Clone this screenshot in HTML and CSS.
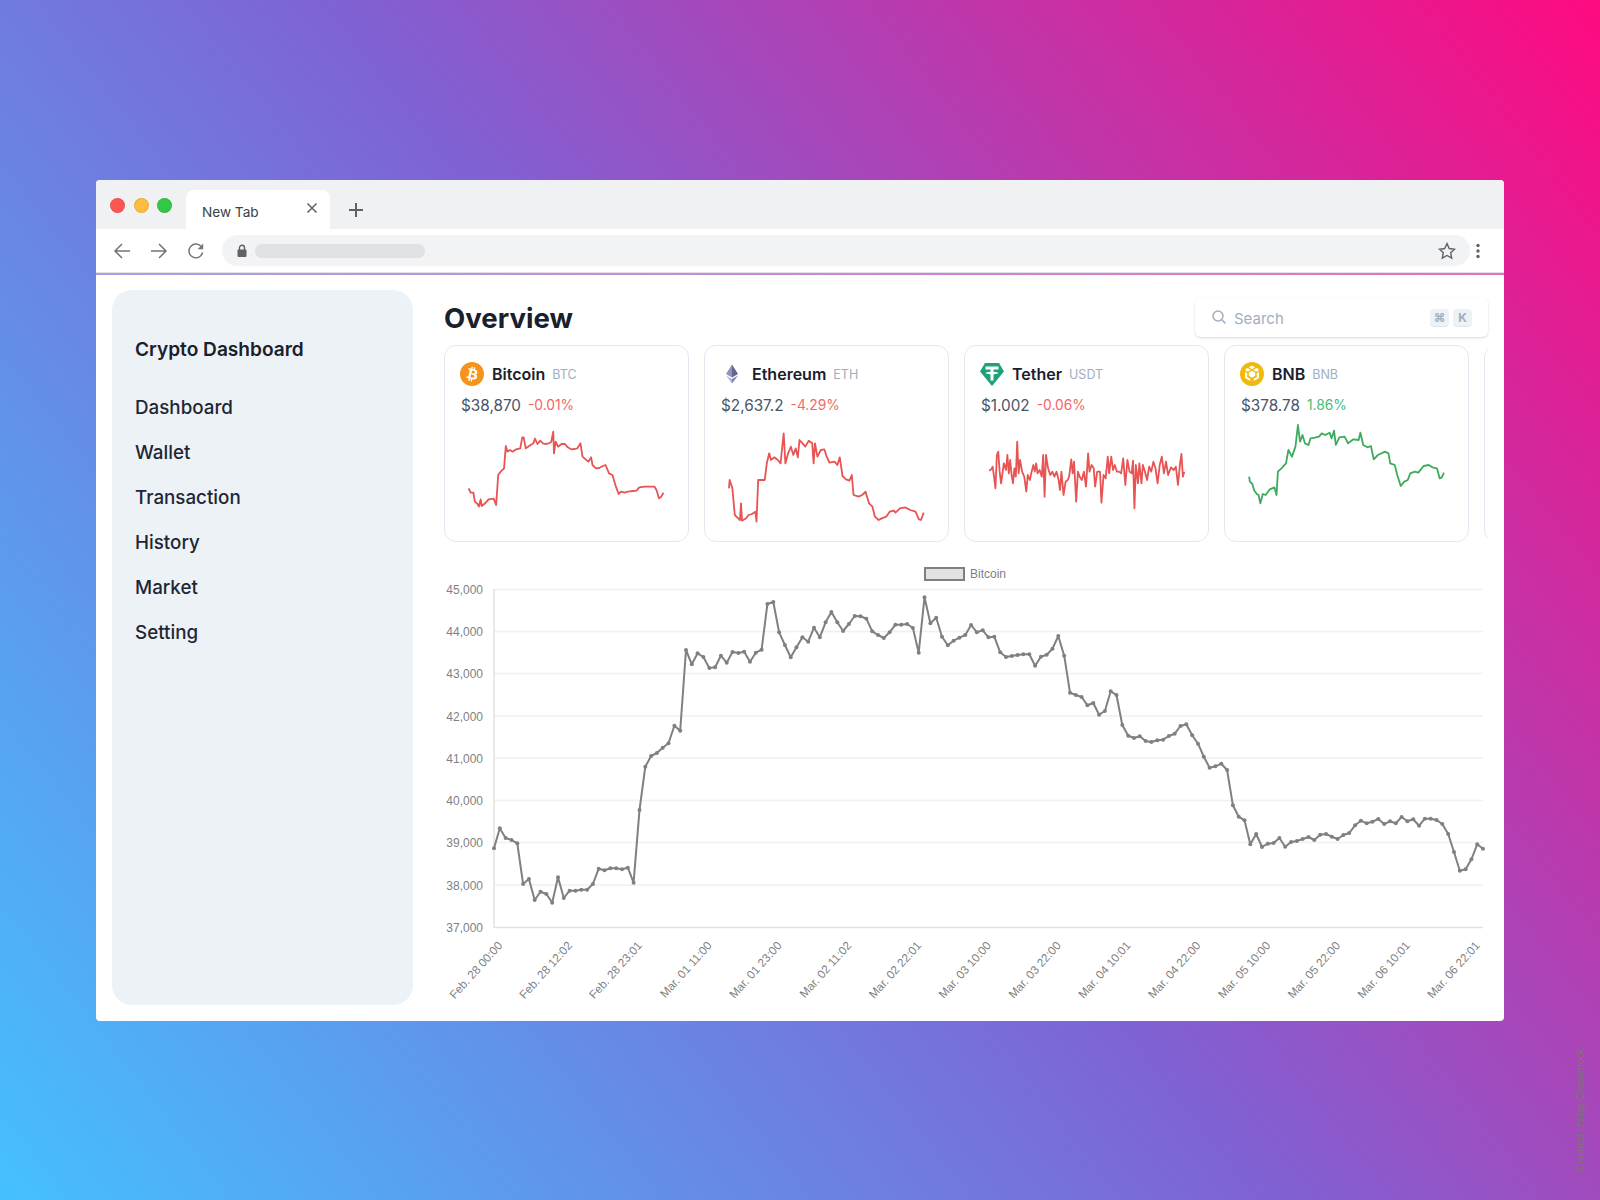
FILE: index.html
```html
<!DOCTYPE html>
<html lang="en">
<head>
    <meta charset="UTF-8">
    <title>Crypto Dashboard</title>
    <link rel="stylesheet" href="styles.css">
</head>
<body>
    <svg class="defs" width="0" height="0">
        <defs>
            <marker id="dot" markerUnits="userSpaceOnUse" markerWidth="6" markerHeight="6" refX="3" refY="3">
                <circle cx="3" cy="3" r="2" fill="#808080"/>
            </marker>
        </defs>
    </svg>

    <div class="window">
        <!-- Browser chrome -->
        <div class="tabbar">
            <div class="lights">
                <span class="light red"></span>
                <span class="light yellow"></span>
                <span class="light green"></span>
            </div>
            <div class="tab">
                <span class="tab-title">New Tab</span>
                <svg class="tab-close" width="12" height="12" viewBox="0 0 12 12"><path d="M1.5 1.5l9 9M10.5 1.5l-9 9"/></svg>
            </div>
            <svg class="tab-new" width="18" height="18" viewBox="0 0 18 18"><path d="M9 2v14M2 9h14"/></svg>
        </div>
        <div class="toolbar">
            <svg class="nav-btn" width="18" height="18" viewBox="0 0 18 18"><path d="M17 9H2M9 2L2 9l7 7"/></svg>
            <svg class="nav-btn" width="18" height="18" viewBox="0 0 18 18"><path d="M1 9h15M9 2l7 7-7 7"/></svg>
            <svg class="nav-btn" width="18" height="18" viewBox="0 0 18 18"><path d="M15.6 10.5A6.9 6.9 0 1 1 14 4.3"/><path class="solid" d="M16.2 1.6v5.6h-5.6z"/></svg>
            <div class="urlbar">
                <svg class="lock" width="10" height="13" viewBox="0 0 10 13"><path d="M2.5 6V3.8a2.5 2.5 0 0 1 5 0V6" class="shackle"/><rect x="0.5" y="5.5" width="9" height="7.5" rx="1"/></svg>
                <span class="url-pill"></span>
                <svg class="star" width="18" height="18" viewBox="0 0 18 18"><path d="M9 1.6l2.3 4.9 5.3.7-3.9 3.6 1 5.3L9 13.5l-4.7 2.6 1-5.3-3.9-3.6 5.3-.7z"/></svg>
            </div>
            <svg class="menu-dots" width="4" height="16" viewBox="0 0 4 16"><circle cx="2" cy="2.5" r="1.7"/><circle cx="2" cy="8" r="1.7"/><circle cx="2" cy="13.5" r="1.7"/></svg>
        </div>
        <div class="chrome-line"></div>

        <div class="content">
            <aside class="sidebar">
                <h2 class="brand">Crypto Dashboard</h2>
                <a class="nav-item">Dashboard</a>
                <a class="nav-item">Wallet</a>
                <a class="nav-item">Transaction</a>
                <a class="nav-item">History</a>
                <a class="nav-item">Market</a>
                <a class="nav-item">Setting</a>
            </aside>

            <main class="main">
                <div class="main-head">
                    <h1 class="title">Overview</h1>
                    <div class="search">
                        <svg class="search-icon" width="16" height="16" viewBox="0 0 16 16"><circle cx="7" cy="7" r="5"/><path d="M10.8 10.8l3.6 3.6"/></svg>
                        <span class="search-text">Search</span>
                        <kbd class="key">⌘</kbd>
                        <kbd class="key">K</kbd>
                    </div>
                </div>

                <div class="cards">
                    <!-- Bitcoin -->
                    <div class="card">
                        <div class="coin">
                            <svg class="coin-icon" width="24" height="24" viewBox="0 0 32 32"><circle cx="16" cy="16" r="16" fill="#f7931a"/><path fill="#fff" d="M23.189 14.02c.314-2.096-1.283-3.223-3.465-3.975l.708-2.84-1.728-.43-.69 2.765c-.454-.114-.92-.22-1.385-.326l.695-2.783L15.596 6l-.708 2.839c-.376-.086-.746-.17-1.104-.26l.002-.009-2.384-.595-.46 1.846s1.283.294 1.256.312c.7.175.826.638.805 1.006l-.806 3.235c.048.012.11.03.18.057l-.183-.045-1.13 4.532c-.086.212-.303.531-.793.41.018.025-1.256-.313-1.256-.313l-.858 1.978 2.25.561c.418.105.828.215 1.231.318l-.715 2.872 1.727.43.708-2.84c.472.127.93.245 1.378.357l-.706 2.828 1.728.43.715-2.866c2.948.558 5.164.333 6.097-2.333.752-2.146-.037-3.385-1.588-4.192 1.13-.26 1.98-1.003 2.207-2.538zm-3.95 5.538c-.533 2.147-4.148.986-5.32.695l.95-3.805c1.172.293 4.929.872 4.37 3.11zm.535-5.569c-.487 1.953-3.495.96-4.47.717l.86-3.45c.975.243 4.118.696 3.61 2.733z"/></svg>
                            <span class="coin-name">Bitcoin</span>
                            <span class="coin-tick">BTC</span>
                        </div>
                        <div class="price-row">
                            <span class="price">$38,870</span>
                            <span class="change down">-0.01%</span>
                        </div>
                        <svg class="spark down" width="212" height="110" viewBox="87 240 616 330" preserveAspectRatio="none">
                            <polyline points="112,445 118,458 126,458 130,485 138,492 142,500 147,478 150,498 160,490 170,478 185,476 192,495 198,405 205,395 215,385 220,318 225,335 232,330 240,335 250,328 262,325 268,292 272,292 278,325 285,320 292,315 300,310 305,296 312,312 320,302 328,310 335,312 345,310 352,306 358,275 360,340 365,305 372,320 382,312 392,312 400,322 410,328 420,327 428,325 437,310 443,350 452,358 460,365 468,352 472,375 482,385 492,384 502,378 510,375 520,400 530,405 540,440 548,462 555,455 565,458 575,455 590,453 600,452 608,442 625,440 640,440 652,440 658,450 665,475 672,470 678,458"/>
                        </svg>
                    </div>
                    <!-- Ethereum -->
                    <div class="card">
                        <div class="coin">
                            <svg class="coin-icon" width="24" height="24" viewBox="0 0 24 24"><path fill="#8f93bd" d="M12 2.500L6 12l6 3.500z"/><path fill="#62668f" d="M12 2.500L18 12l-6 3.500z"/><path fill="#b3b6d6" d="M6 13.500l6 8v-4.500z"/><path fill="#7d81ad" d="M18 13.500l-6 8v-4.500z"/></svg>
                            <span class="coin-name">Ethereum</span>
                            <span class="coin-tick">ETH</span>
                        </div>
                        <div class="price-row">
                            <span class="price">$2,637.2</span>
                            <span class="change down">-4.29%</span>
                        </div>
                        <svg class="spark down" width="212" height="110" viewBox="842 240 616 330" preserveAspectRatio="none">
                            <polyline points="868,445 870,420 878,445 885,525 895,535 900,540 903,490 906,542 918,535 925,525 935,522 945,515 948,545 953,420 962,420 972,420 978,370 985,340 990,360 1000,352 1010,360 1018,370 1027,280 1032,370 1040,340 1048,320 1055,345 1062,325 1068,352 1073,300 1082,310 1090,320 1100,302 1110,310 1114,370 1118,310 1125,350 1135,330 1145,328 1152,350 1160,368 1175,365 1183,375 1190,352 1198,408 1208,418 1218,422 1225,405 1230,465 1245,470 1255,465 1265,455 1275,490 1285,500 1292,530 1303,540 1312,535 1325,530 1335,515 1348,512 1352,518 1365,505 1380,502 1395,510 1410,515 1420,538 1426,540 1434,518"/>
                        </svg>
                    </div>
                    <!-- Tether -->
                    <div class="card">
                        <div class="coin">
                            <svg class="coin-icon" width="24" height="24" viewBox="0 0 24 24"><path fill="#1ba27a" d="M5 1h14l5 8.500L12 24 0 9.500z"/><path fill="#fff" d="M5.500 4.500h13v3h-5v2.300c2.700.2 4.800.7 4.800 1.300s-2.100 1.100-4.800 1.300v6h-3v-6c-2.700-.2-4.800-.7-4.800-1.300s2.100-1.100 4.800-1.300V7.500h-5z"/></svg>
                            <span class="coin-name">Tether</span>
                            <span class="coin-tick">USDT</span>
                        </div>
                        <div class="price-row">
                            <span class="price">$1.002</span>
                            <span class="change down">-0.06%</span>
                        </div>
                        <svg class="spark down" width="212" height="110" viewBox="86 240 604 330" preserveAspectRatio="none">
                            <polyline points="112,392 118,388 122,380 126,410 130,445 134,345 138,335 142,395 146,430 150,400 154,370 160,390 164,345 168,400 172,360 176,405 180,430 184,385 188,410 192,305 196,400 200,360 206,395 212,410 218,455 222,405 228,420 232,400 238,375 242,395 246,370 250,400 256,390 262,410 266,345 270,470 274,345 280,385 286,405 292,395 298,410 304,395 310,420 314,450 318,395 324,465 330,425 336,420 340,410 346,358 350,400 354,365 360,485 365,395 370,410 376,420 382,395 388,440 394,340 398,395 404,375 410,385 414,440 420,395 428,395 432,488 438,405 444,415 450,350 454,400 460,350 465,390 470,375 476,395 482,395 488,400 494,355 500,435 506,360 512,395 518,400 522,362 526,505 530,375 536,430 540,370 546,430 550,375 556,395 562,420 568,380 574,395 580,365 586,385 592,430 598,375 604,350 610,400 616,365 622,405 630,382 638,390 644,380 650,435 656,370 660,342 664,410 668,395"/>
                        </svg>
                    </div>
                    <!-- BNB -->
                    <div class="card">
                        <div class="coin">
                            <svg class="coin-icon" width="24" height="24" viewBox="0 0 24 24"><circle cx="12" cy="12" r="12" fill="#f0b90b"/><path fill="#fff" d="M12 3.500l3.200 1.800-3.200 1.900-3.200-1.900zM7.500 6l3.200 1.900-3.200 1.900-2-1.100V7.100zM16.500 6l2 1.100v1.600l-2 1.100-3.200-1.900zM12 8.700l3.200 1.800v3.300L12 15.700l-3.200-1.900v-3.300zM5 10l2.200 1.200v3.700l3.100 1.800v2.400L5 16.100zM19 10v6.100l-5.300 3v-2.400l3.100-1.800v-3.700z"/></svg>
                            <span class="coin-name">BNB</span>
                            <span class="coin-tick">BNB</span>
                        </div>
                        <div class="price-row">
                            <span class="price">$378.78</span>
                            <span class="change up">1.86%</span>
                        </div>
                        <svg class="spark up" width="212" height="110" viewBox="827 240 604 330" preserveAspectRatio="none">
                            <polyline points="853,410 855,425 862,432 868,452 875,462 880,465 885,490 892,462 900,465 912,448 925,442 931,465 935,395 945,385 958,370 965,330 975,350 985,320 992,255 998,305 1005,285 1012,310 1022,315 1028,295 1040,293 1052,290 1060,280 1070,285 1082,278 1088,295 1095,272 1100,315 1110,292 1125,290 1135,310 1150,298 1165,300 1170,278 1178,315 1190,322 1200,318 1208,358 1220,345 1240,335 1250,340 1255,370 1268,375 1275,405 1285,438 1295,425 1305,420 1312,400 1325,395 1335,398 1350,378 1365,375 1375,382 1388,385 1396,415 1402,412 1408,398"/>
                        </svg>
                    </div>
                    <div class="card"></div>
                </div>

                <!-- Main price chart, coordinates are the same as on the page -->
                <svg class="chart" width="1044" height="450" viewBox="444 555 1044 450">
                    <rect class="legend-box" x="925" y="568" width="39" height="12"/>
                    <text class="chart-text" x="970" y="578">Bitcoin</text>

                    <path class="grid" d="M494 589.500H1483M494 631.500H1483M494 673.500H1483M494 716H1483M494 758H1483M494 800.500H1483M494 842.500H1483M494 885H1483"/>
                    <path class="axis" d="M494 927.500H1483M494 589V928"/>

                    <text class="chart-text y-tick" x="483" y="594">45,000</text>
                    <text class="chart-text y-tick" x="483" y="636">44,000</text>
                    <text class="chart-text y-tick" x="483" y="678">43,000</text>
                    <text class="chart-text y-tick" x="483" y="721">42,000</text>
                    <text class="chart-text y-tick" x="483" y="763">41,000</text>
                    <text class="chart-text y-tick" x="483" y="805">40,000</text>
                    <text class="chart-text y-tick" x="483" y="847">39,000</text>
                    <text class="chart-text y-tick" x="483" y="890">38,000</text>
                    <text class="chart-text y-tick" x="483" y="932">37,000</text>

                    <text class="chart-text x-tick" transform="translate(503 946) rotate(-48)">Feb. 28 00:00</text>
                    <text class="chart-text x-tick" transform="translate(572.800 946) rotate(-48)">Feb. 28 12:02</text>
                    <text class="chart-text x-tick" transform="translate(642.600 946) rotate(-48)">Feb. 28 23:01</text>
                    <text class="chart-text x-tick" transform="translate(712.400 946) rotate(-48)">Mar. 01 11:00</text>
                    <text class="chart-text x-tick" transform="translate(782.300 946) rotate(-48)">Mar. 01 23:00</text>
                    <text class="chart-text x-tick" transform="translate(852.100 946) rotate(-48)">Mar. 02 11:02</text>
                    <text class="chart-text x-tick" transform="translate(921.900 946) rotate(-48)">Mar. 02 22:01</text>
                    <text class="chart-text x-tick" transform="translate(991.700 946) rotate(-48)">Mar. 03 10:00</text>
                    <text class="chart-text x-tick" transform="translate(1061.500 946) rotate(-48)">Mar. 03 22:00</text>
                    <text class="chart-text x-tick" transform="translate(1131.300 946) rotate(-48)">Mar. 04 10:01</text>
                    <text class="chart-text x-tick" transform="translate(1201.200 946) rotate(-48)">Mar. 04 22:00</text>
                    <text class="chart-text x-tick" transform="translate(1271 946) rotate(-48)">Mar. 05 10:00</text>
                    <text class="chart-text x-tick" transform="translate(1340.800 946) rotate(-48)">Mar. 05 22:00</text>
                    <text class="chart-text x-tick" transform="translate(1410.600 946) rotate(-48)">Mar. 06 10:01</text>
                    <text class="chart-text x-tick" transform="translate(1480.400 946) rotate(-48)">Mar. 06 22:01</text>

                    <polyline class="price-line" points="494,848.3 499.8,828.3 505.6,838 511.5,840 517.3,843.3 523.1,884 528.9,879 534.7,900 540.5,891.7 546.4,894 552.2,902.7 558,877.3 563.8,898 569.6,890.7 575.5,890.7 581.3,889.7 587.1,889.7 592.9,884 598.7,868.7 604.5,870.3 610.4,868.3 616.2,868.3 622,869.3 627.8,867.7 633.6,882.7 639.5,810 645.3,766.7 651.1,756 656.9,753 662.7,747.7 668.5,743.3 674.4,725.7 680.2,730.7 686,650 691.8,664.3 697.6,653.3 703.4,657 709.3,668 715.1,667.3 720.9,655.7 726.7,662.7 732.5,652 738.4,653 744.2,651.7 750,661.7 755.8,652.7 761.6,649.7 767.4,604 773.3,602 779.1,632.3 784.9,645 790.7,657.3 796.5,647.3 802.4,637.3 808.2,641.7 814,627.7 819.8,637.3 825.6,622.3 831.4,612 837.3,622.3 843.1,631 848.9,624 854.7,616 860.5,616.3 866.4,618.7 872.2,631.3 878,635 883.8,638 889.6,632.3 895.4,624.7 901.3,624.7 907.1,624 912.9,628 918.7,652.7 924.5,597.3 930.4,623.3 936.2,617.7 942,636.7 947.8,645.3 953.6,640.7 959.4,637.7 965.3,635 971.1,625 976.9,632.3 982.7,630.3 988.5,637.3 994.3,636.7 1000.2,652.3 1006,657 1011.8,656 1017.6,655 1023.4,654.3 1029.3,654.3 1035.1,665.7 1040.9,656.7 1046.7,654.7 1052.5,648.7 1058.3,636 1064.2,655.7 1070,692.7 1075.8,695 1081.6,697 1087.4,705.3 1093.3,703 1099.1,714.7 1104.9,711 1110.7,691.3 1116.5,695 1122.3,725 1128.2,735.7 1134,738 1139.8,736.3 1145.6,741 1151.4,742 1157.3,740.3 1163.1,739.7 1168.9,736 1174.7,733.7 1180.5,726 1186.3,724.3 1192.2,735.3 1198,743.7 1203.8,756.7 1209.6,767.7 1215.4,766.3 1221.3,763.7 1227.1,770 1232.9,805.3 1238.7,816.7 1244.5,820.3 1250.3,844.3 1256.2,834 1262,847 1267.8,843.7 1273.6,843 1279.4,838 1285.2,846.7 1291.1,842 1296.9,841 1302.7,839 1308.5,837 1314.3,840 1320.2,834.7 1326,834 1331.8,836.7 1337.6,839 1343.4,835 1349.2,833 1355.1,825.3 1360.9,820.7 1366.7,823.3 1372.5,821.7 1378.3,819 1384.2,824 1390,821.3 1395.8,823.3 1401.6,817 1407.4,821.3 1413.2,819.3 1419.1,825.7 1424.9,818.7 1430.7,818.7 1436.5,820 1442.3,824 1448.2,834 1454,852 1459.8,870.7 1465.6,869.3 1471.4,859.3 1477.2,844.3 1483,848.7"/>
                </svg>
            </main>
        </div>
    </div>

    <div class="watermark">Created Using Cleanmock</div>
</body>
</html>
```

FILE: styles.css
```css
* {
    box-sizing: border-box;
}

body {
    margin: 0;
    height: 1200px;
    padding: 180px 96px 0;
    overflow: hidden;
    font-family: Inter, "Noto Sans", sans-serif;
    color: #1a202c;
    background: linear-gradient(52deg, #45c0ff 0%, #7f62d4 50%, #ff0a80 100%);
}

.defs {
    position: absolute;
}

.window {
    height: 841px;
    background: #fff;
    border-radius: 4px;
    overflow: hidden;
}

/* Browser chrome */
.tabbar {
    display: flex;
    height: 49px;
    padding-left: 14px;
    background: #eff1f3;
}

.lights {
    display: flex;
    gap: 8.500px;
    padding-top: 18px;
}

.light {
    width: 15px;
    height: 15px;
    border-radius: 50%;
    border: 1px solid rgba(0, 0, 0, 0.08);
}

.red { background: #fc5753; }
.yellow { background: #fdbc40; }
.green { background: #33c748; }

.tab {
    display: flex;
    align-items: center;
    justify-content: space-between;
    width: 144px;
    height: 39px;
    margin: 10px 0 0 14px;
    padding: 4px 12px 0 16px;
    background: #fff;
    border-radius: 8px 8px 0 0;
}

.tab-title {
    font-size: 13.600px;
    color: #3c4043;
}

.tab-close {
    margin-top: -7px;
    fill: none;
    stroke: #5f6368;
    stroke-width: 1.5;
}

.tab-new {
    margin: 21px 0 0 17px;
    fill: none;
    stroke: #5f6368;
    stroke-width: 2;
}

.toolbar {
    display: flex;
    align-items: center;
    gap: 19px;
    height: 43px;
    padding: 0 24px 0 17px;
}

.nav-btn {
    flex: none;
    fill: none;
    stroke: #70757a;
    stroke-width: 1.5;
}

.nav-btn .solid {
    fill: #70757a;
    stroke: none;
}

.urlbar {
    display: flex;
    align-items: center;
    flex: 1;
    height: 31px;
    margin-left: -2px;
    padding: 0 14px;
    background: #f1f3f4;
    border-radius: 16px;
}

.lock {
    flex: none;
    margin-left: 1px;
    fill: #5f6368;
}

.lock .shackle {
    fill: none;
    stroke: #5f6368;
    stroke-width: 1.4;
}

.url-pill {
    width: 170px;
    height: 14px;
    margin-left: 8px;
    background: #dfe1e5;
    border-radius: 7px;
}

.star {
    margin-left: auto;
    fill: none;
    stroke: #5f6368;
    stroke-width: 1.4;
}

.menu-dots {
    flex: none;
    margin-left: -13px;
    fill: #5f6368;
}

.chrome-line {
    height: 3px;
    border-top: 1px solid #e2e2e6;
    background: linear-gradient(to right, #a9a0e8, #ea70c0);
    background-origin: border-box;
}

/* Page */
.content {
    display: flex;
    gap: 31px;
    padding: 15px 16px 16px;
}

.sidebar {
    flex: none;
    width: 301px;
    height: 715px;
    padding: 45px 0 0 23px;
    background: #edf2f7;
    border-radius: 20px;
}

.brand {
    margin: 0 0 22px;
    font-size: 19.100px;
    line-height: 28px;
    font-weight: 600;
}

.nav-item {
    display: block;
    height: 45px;
    font-size: 18.800px;
    font-weight: 500;
    line-height: 45px;
    color: #1f2633;
}

.main {
    flex: 1;
    min-width: 0;
}

.main-head {
    display: flex;
    align-items: center;
    justify-content: space-between;
    padding-top: 8px;
    margin-bottom: 8px;
}

.title {
    margin: 0;
    font-size: 27.600px;
    line-height: 36px;
    font-weight: 700;
}

.search {
    display: flex;
    align-items: center;
    gap: 4px;
    width: 293px;
    height: 39px;
    padding: 0 16px;
    background: #fff;
    border-radius: 6px;
    box-shadow: 0 1px 3px rgba(0, 0, 0, 0.1), 0 1px 2px rgba(0, 0, 0, 0.06);
}

.search-icon {
    flex: none;
    margin-top: -1px;
    fill: none;
    stroke: #a0aec0;
    stroke-width: 1.5;
}

.search-text {
    flex: 1;
    margin: 1px 0 0 3px;
    font-size: 15px;
    color: #a0aec0;
}

.key {
    width: 19px;
    height: 18px;
    font-family: Inter, "DejaVu Sans", sans-serif;
    font-size: 12px;
    font-weight: 700;
    line-height: 17px;
    text-align: center;
    color: #a0aec0;
    background: #edf2f7;
    border-bottom: 1px solid #dfe5ee;
    border-radius: 4px;
}

/* Coin cards */
.cards {
    display: flex;
    gap: 15px;
    overflow: hidden;
}

.card {
    flex: none;
    width: 245px;
    height: 197px;
    padding: 16px 16px 0;
    background: #fff;
    border: 1px solid #e2e8f0;
    border-radius: 12px;
}

.coin {
    display: flex;
    align-items: center;
    height: 24px;
    margin-left: -1px;
}

.coin-icon {
    flex: none;
}

.coin-name {
    margin-left: 8px;
    font-size: 16px;
    font-weight: 600;
}

.coin-tick {
    margin-left: 7px;
    font-size: 12.500px;
    color: #a0aec0;
}

.price-row {
    display: flex;
    align-items: center;
    gap: 7px;
    height: 22px;
    margin-top: 8px;
}

.price {
    font-size: 15.300px;
    color: #4a5568;
}

.change {
    font-size: 13.800px;
}

.change.down { color: #f56565; }
.change.up { color: #48bb78; }

.spark {
    display: block;
    margin-top: 4px;
    margin-left: -1px;
    fill: none;
}

.spark polyline {
    stroke-width: 1.800;
    stroke-linejoin: round;
    vector-effect: non-scaling-stroke;
}

.spark.down polyline { stroke: #e85353; }
.spark.up polyline { stroke: #3dab5c; }

/* Price chart */
.chart {
    display: block;
    margin-top: 13px;
}

.chart-text {
    font-family: "Liberation Sans", Arial, sans-serif;
    font-size: 12px;
    fill: #7f7f7f;
}

.y-tick,
.x-tick {
    text-anchor: end;
}

.x-tick {
    font-size: 11.700px;
}

.legend-box {
    fill: #e3e3e3;
    stroke: #808080;
    stroke-width: 2;
}

.grid {
    fill: none;
    stroke: #f0f0f0;
    stroke-width: 1.500;
}

.axis {
    fill: none;
    stroke: #e2e2e2;
    stroke-width: 1.500;
}

.price-line {
    fill: none;
    stroke: #808080;
    stroke-width: 2;
    stroke-linejoin: round;
    marker-start: url(#dot);
    marker-mid: url(#dot);
    marker-end: url(#dot);
}

.watermark {
    position: absolute;
    right: 14px;
    top: 1048px;
    font-family: "Liberation Sans", Arial, sans-serif;
    font-size: 10.600px;
    color: #777;
    writing-mode: vertical-rl;
    transform: rotate(180deg);
}
```
